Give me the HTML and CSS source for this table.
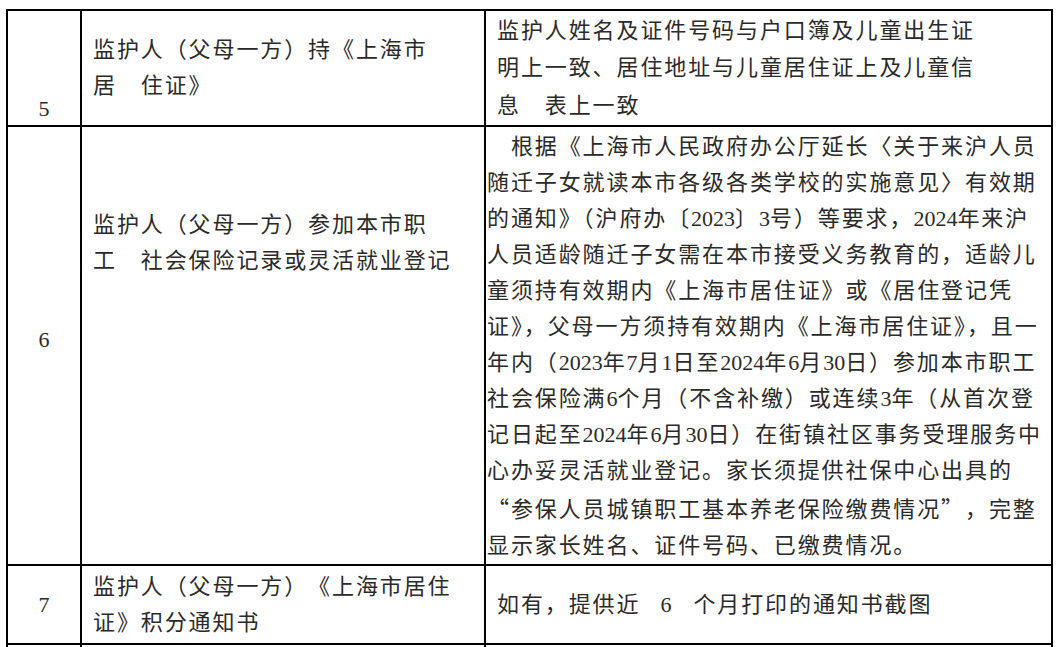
FILE: index.html
```html
<!DOCTYPE html>
<html lang="zh-CN">
<head>
<meta charset="utf-8">
<title>材料要求</title>
<link rel="stylesheet" href="styles.css">
</head>
<body>
<table class="sheet">
  <colgroup>
    <col class="c1"><col class="c2"><col class="c3">
  </colgroup>
  <tbody>
    <tr class="r5">
      <td class="num bottom">5</td>
      <td class="item">
        <div class="ln">监护人（父母一方）持《上海市</div>
        <div class="ln">居　住证》</div>
      </td>
      <td class="desc pad">
        <div class="ln tall">监护人姓名及证件号码与户口簿及儿童出生证</div>
        <div class="ln tall">明上一致、居住地址与儿童居住证上及儿童信</div>
        <div class="ln tall">息　表上一致</div>
      </td>
    </tr>
    <tr class="r6">
      <td class="num raised">6</td>
      <td class="item top">
        <div class="ln">监护人（父母一方）参加本市职</div>
        <div class="ln">工　社会保险记录或灵活就业登记</div>
      </td>
      <td class="desc tight">
        <div class="ln">　根据《上海市人民政府办公厅延长〈关于来沪人员</div>
        <div class="ln">随迁子女就读本市各级各类学校的实施意见〉有效期</div>
        <div class="ln">的通知》（沪府办〔<span class="n">2023</span>〕<span class="n">3</span>号）等要求，<span class="n">2024</span>年来沪</div>
        <div class="ln">人员适龄随迁子女需在本市接受义务教育的，适龄儿</div>
        <div class="ln">童须持有效期内《上海市居住证》或《居住登记凭</div>
        <div class="ln">证》，父母一方须持有效期内《上海市居住证》，且一</div>
        <div class="ln">年内（<span class="n">2023</span>年<span class="n">7</span>月<span class="n">1</span>日至<span class="n">2024</span>年<span class="n">6</span>月<span class="n">30</span>日）参加本市职工</div>
        <div class="ln">社会保险满<span class="n">6</span>个月（不含补缴）或连续<span class="n">3</span>年（从首次登</div>
        <div class="ln">记日起至<span class="n">2024</span>年<span class="n">6</span>月<span class="n">30</span>日）在街镇社区事务受理服务中</div>
        <div class="ln">心办妥灵活就业登记。家长须提供社保中心出具的</div>
        <div class="ln"><span class="q open">“</span>参保人员城镇职工基本养老保险缴费情况<span class="q close">”</span>，完整</div>
        <div class="ln">显示家长姓名、证件号码、已缴费情况。</div>
      </td>
    </tr>
    <tr class="r7">
      <td class="num">7</td>
      <td class="item spaced">
        <div class="ln">监护人（父母一方）《上海市居住</div>
        <div class="ln">证》积分通知书</div>
      </td>
      <td class="desc pad">
        <div class="ln">如有，提供近<span class="n six">6</span>个月打印的通知书截图</div>
      </td>
    </tr>
    <tr class="r8">
      <td></td><td></td><td></td>
    </tr>
  </tbody>
</table>
</body>
</html>
```
FILE: styles.css
```css
html, body {
  margin: 0;
  padding: 0;
  background: #ffffff;
}

body {
  overflow: hidden;
  height: 647px;
}

.sheet {
  border-collapse: collapse;
  table-layout: fixed;
  width: 1047px;
  margin: 9px 0 0 6px;
  font-family: "Liberation Serif", "Noto Sans CJK SC", serif;
  font-size: 22px;
  color: #2a2a2a;
  letter-spacing: 1.9px;
}

.c1 { width: 74px; }
.c2 { width: 404px; }
.c3 { width: 567px; }

.sheet td {
  border: 2px solid #000;
  padding: 0;
  vertical-align: middle;
}

.sheet .r5 { height: 116px; }
.sheet .r6 { height: 433px; }
.sheet .r7 { height: 79px; }
.sheet .r8 { height: 40px; }

.ln {
  line-height: 36px;
  white-space: nowrap;
}

.ln.tall {
  line-height: 37.5px;
}

.sheet .num {
  text-align: center;
  font-family: "Liberation Serif", serif;
  letter-spacing: 0;
  line-height: 36px;
}

.sheet .num.bottom {
  vertical-align: bottom;
  line-height: 32px;
}

.sheet .num.raised {
  padding-bottom: 11px;
}

.sheet .item {
  padding-left: 11px;
}

.sheet .item.top {
  vertical-align: top;
  padding-top: 80px;
}

.sheet .item.spaced {
  text-spacing-trim: space-all;
}

.sheet .desc.pad {
  padding-left: 11px;
}

.sheet .desc.tight {
  vertical-align: top;
  padding-left: 1px;
  padding-top: 2px;
}

.n {
  letter-spacing: 0;
}

.six {
  padding-left: 20px;
  padding-right: 22px;
}

.q {
  display: inline-block;
  width: 22px;
  margin-right: 1.9px;
  letter-spacing: 0;
  font-family: "Noto Sans CJK SC", sans-serif;
}

.q.open {
  text-align: right;
}

.q.close {
  text-align: left;
}
```
